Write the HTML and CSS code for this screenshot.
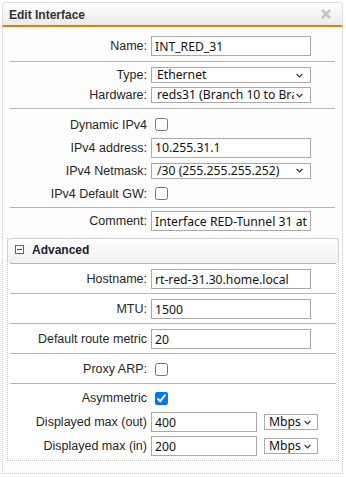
FILE: index.html
```html
<!DOCTYPE html>
<html lang="en">

<head>
    <meta charset="UTF-8">
    <meta name="viewport" content="width=device-width, initial-scale=1.0">
    <title>Edit Interface</title>
    <link rel="stylesheet" href="styles.css">
</head>

<body>

    <div class="dialog">
        <div class="dialog-head">
            <span class="dialog-title">Edit Interface</span>
            <svg class="close" width="10" height="10" viewBox="0 0 10 10">
                <path d="M1 1L9 9M9 1L1 9" stroke="#c4c4c4" stroke-width="2.6" fill="none" />
            </svg>
        </div>

        <div class="dialog-body">
            <div class="group group-name">
                <div class="row">
                    <label for="name">Name:</label>
                    <input class="text" type="text" id="name" value="INT_RED_31">
                </div>
            </div>

            <div class="group group-type">
                <div class="row row-select">
                    <label for="type">Type:</label>
                    <select class="select" id="type">
                        <option>Ethernet</option>
                    </select>
                </div>
                <div class="row row-select">
                    <label for="hardware">Hardware:</label>
                    <select class="select" id="hardware">
                        <option>reds31 (Branch 10 to Branch 31)</option>
                    </select>
                </div>
            </div>

            <div class="group group-ipv4">
                <div class="row row-ipv4">
                    <label for="dynamic">Dynamic IPv4</label>
                    <input class="check" type="checkbox" id="dynamic">
                </div>
                <div class="row row-ipv4">
                    <label for="address">IPv4 address:</label>
                    <input class="text" type="text" id="address" value="10.255.31.1">
                </div>
                <div class="row row-ipv4">
                    <label for="netmask">IPv4 Netmask:</label>
                    <select class="select" id="netmask">
                        <option>/30 (255.255.255.252)</option>
                    </select>
                </div>
                <div class="row row-ipv4">
                    <label for="gateway">IPv4 Default GW:</label>
                    <input class="check" type="checkbox" id="gateway">
                </div>
            </div>

            <div class="group group-comment">
                <div class="row">
                    <label for="comment">Comment:</label>
                    <input class="text" type="text" id="comment" value="Interface RED-Tunnel 31 at Branch">
                </div>
            </div>

            <div class="advanced">
                <div class="advanced-head">
                    <span class="toggle"></span>
                    <span class="advanced-title">Advanced</span>
                </div>

                <div class="group group-adv">
                    <div class="row row-adv">
                        <label for="hostname">Hostname:</label>
                        <input class="text" type="text" id="hostname" value="rt-red-31.30.home.local">
                    </div>
                </div>
                <div class="group group-adv">
                    <div class="row row-adv">
                        <label for="mtu">MTU:</label>
                        <input class="text" type="text" id="mtu" value="1500">
                    </div>
                </div>
                <div class="group group-adv">
                    <div class="row row-adv">
                        <label for="metric">Default route metric</label>
                        <input class="text" type="text" id="metric" value="20">
                    </div>
                </div>
                <div class="group group-adv">
                    <div class="row row-adv">
                        <label for="proxyarp">Proxy ARP:</label>
                        <input class="check" type="checkbox" id="proxyarp">
                    </div>
                </div>
                <div class="group group-bandwidth">
                    <div class="row row-bw">
                        <label for="asym">Asymmetric</label>
                        <input class="check" type="checkbox" id="asym" checked>
                    </div>
                    <div class="row row-bw">
                        <label for="maxout">Displayed max (out)</label>
                        <input class="text text-short" type="text" id="maxout" value="400">
                        <select class="select select-unit">
                            <option>Mbps</option>
                        </select>
                    </div>
                    <div class="row row-bw">
                        <label for="maxin">Displayed max (in)</label>
                        <input class="text text-short" type="text" id="maxin" value="200">
                        <select class="select select-unit">
                            <option>Mbps</option>
                        </select>
                    </div>
                </div>
            </div>
        </div>
    </div>

</body>

</html>
```

FILE: styles.css
```css
body {
    margin: 0;
    padding-top: 2px;
    font-family: 'Liberation Sans', Arial, sans-serif;
    font-size: 12px;
    color: #262626;
    background-color: #fff;
}

.dialog {
    width: 341px;
    margin-left: 2px;
}

.dialog-head {
    height: 22px;
    display: flex;
    align-items: center;
    justify-content: space-between;
    padding: 0 11px 0 6px;
    border: 1px solid #dedede;
    border-bottom: 2px solid #e67e00;
    border-radius: 4px 4px 0 0;
    background: linear-gradient(#fff, #ebebeb);
}

.dialog-title {
    font-weight: bold;
    color: #333;
    padding-top: 1px;
}

.close {
    display: block;
}

.dialog-body {
    border: 1px dotted #c9c9c9;
    border-top: none;
    padding-bottom: 12px;
    background-color: #fdfdfd;
}

.group {
    margin: 0 7px;
}

.group + .group {
    border-top: 1px solid #b6b6b6;
}

.row {
    display: flex;
    align-items: center;
    height: 22px;
}

.row label {
    flex: 0 0 137px;
    margin-right: 4px;
    text-align: right;
    white-space: nowrap;
    font-size: 12.5px;
}

/* row spacing per block */
.group-name {
    padding: 8px 0 4px;
}

.group-type {
    padding: 3px 0;
}

.row-select {
    height: 20px;
}

.group-ipv4 {
    padding: 4px 0 2px;
}

.row-ipv4 {
    height: 23px;
}

.group-comment {
    padding: 2px 0 6px;
}

.text {
    box-sizing: border-box;
    width: 160px;
    height: 20px;
    margin: 0;
    padding: 0 3px;
    border: 1px solid #a9a9a9;
    border-radius: 0;
    font-family: 'Noto Sans', sans-serif;
    font-size: 12.2px;
    color: #111;
    background-color: #fff;
}

.text-short {
    width: 106px;
}

.select {
    box-sizing: border-box;
    width: 160px;
    height: 16px;
    margin: 0;
    padding: 0 16px 0 5px;
    border: 1px solid #a9a9a9;
    border-radius: 0;
    appearance: none;
    font-family: 'Noto Sans', sans-serif;
    font-size: 12.2px;
    line-height: 14px;
    color: #111;
    background: #fff url("data:image/svg+xml,%3Csvg xmlns='http://www.w3.org/2000/svg' width='7' height='5'%3E%3Cpath d='M0.6 1l2.9 2.9 2.9-2.9' fill='none' stroke='%23333' stroke-width='1.2'/%3E%3C/svg%3E") no-repeat right 7px center;
}

.select-unit {
    width: 54px;
    margin-left: 7px;
    padding: 0 8px 0 4px;
    background-position: right 6px center;
}

.check {
    width: 13px;
    height: 13px;
    margin: 0 0 0 4px;
}

.advanced {
    margin: 0 3px 0 4px;
    border: 1px dotted #c9c9c9;
    border-top: none;
    background-color: #fff;
}

.advanced-head {
    height: 25px;
    margin: 0 -1px;
    display: flex;
    align-items: flex-start;
    padding: 5px 0 0 7px;
    box-sizing: border-box;
    border: 1px solid #d2d2d2;
    border-bottom: none;
    border-radius: 4px 4px 0 0;
    background: linear-gradient(#fff, #f1f1f1);
}

.toggle {
    position: relative;
    box-sizing: border-box;
    width: 9px;
    height: 9px;
    margin-top: 1px;
    border: 1px solid #666;
    background-color: #fff;
}

.toggle::after {
    content: "";
    position: absolute;
    left: 1px;
    top: 3px;
    width: 5px;
    height: 1px;
    background-color: #444;
}

.advanced-title {
    margin-left: 8px;
    font-weight: bold;
    color: #1b1b38;
    line-height: 12px;
}

.advanced .group {
    margin: 0 2px;
    border-top: 1px solid #b6b6b6;
}

.group-adv {
    padding: 5px 0 4px;
}

.row-adv {
    height: 20px;
}

.group-bandwidth {
    padding: 2px 0 2px;
}

.row-bw {
    height: 24px;
}
```
